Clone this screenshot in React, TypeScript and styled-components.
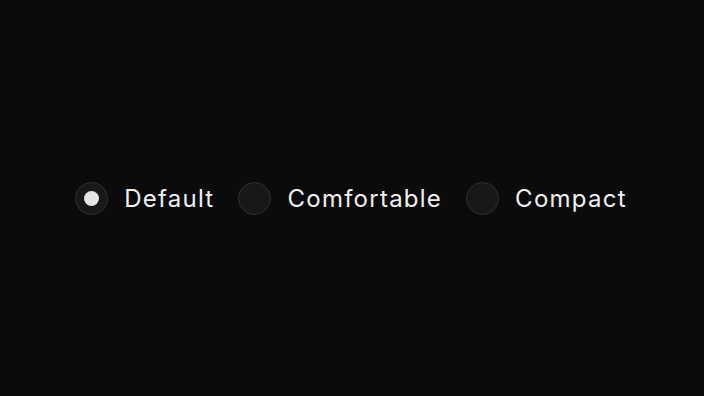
import React, { useState } from "react"
import styled, { createGlobalStyle } from "styled-components"

const GlobalStyle = createGlobalStyle`
  html, body {
    margin: 0;
    padding: 0;
    background: #0b0b0b;
  }
  #root {
    min-height: 100vh;
  }
`

const Page = styled.div`
  width: 100%;
  height: 396px;
  display: flex;
  align-items: center;
  justify-content: center;
  background: #0b0b0b;
  font-family: Inter, "Noto Sans", sans-serif;
`

const Group = styled.div`
  display: flex;
  align-items: center;
  gap: 24px;
  margin-right: 2px;
`

const Option = styled.label`
  display: flex;
  align-items: center;
  gap: 16px;
  cursor: pointer;
`

const Circle = styled.span<{ $checked: boolean }>`
  box-sizing: border-box;
  width: 33px;
  height: 33px;
  border-radius: 50%;
  border: 1.5px solid #303030;
  background: #181818;
  display: flex;
  align-items: center;
  justify-content: center;

  &::after {
    content: "";
    width: 15px;
    height: 15px;
    border-radius: 50%;
    background: #e6e6e6;
    display: ${(p) => (p.$checked ? "block" : "none")};
  }
`

const Label = styled.span`
  color: #f0f0f0;
  font-size: 24px;
  font-weight: 400;
  line-height: 1;
  letter-spacing: 1.25px;
  margin-top: 2px;
`

const options = ["Default", "Comfortable", "Compact"]

const App = () => {
  const [value, setValue] = useState("Default")
  return (
    <Page>
      <GlobalStyle />
      <Group role="radiogroup">
        {options.map((o) => (
          <Option key={o} role="radio" aria-checked={value === o} onClick={() => setValue(o)}>
            <Circle $checked={value === o} />
            <Label>{o}</Label>
          </Option>
        ))}
      </Group>
    </Page>
  )
}

export default App
